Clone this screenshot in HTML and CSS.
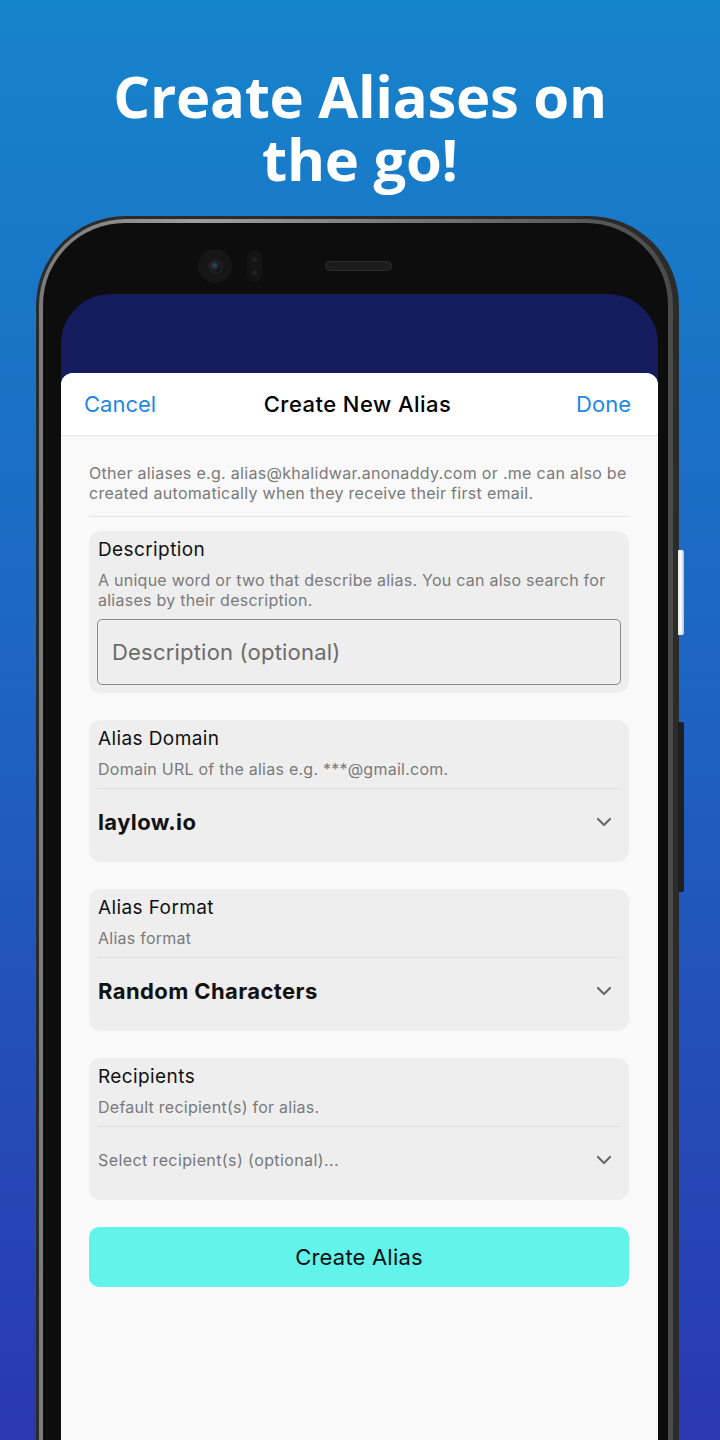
FILE: index.html
```html
<!DOCTYPE html>
<html lang="en">
<head>
<meta charset="utf-8">
<title>Create Aliases on the go!</title>
<link rel="stylesheet" href="styles.css">
</head>
<body>
<h1 class="headline"><span class="hl-line">Create Aliases on</span><span class="hl-line">the go!</span></h1>
<div class="phone">
  <div class="btn-power"></div>
  <div class="btn-volume"></div>
  <div class="rim">
    <div class="bezel">
      <div class="notch">
        <div class="camera"><div class="lens"></div></div>
        <div class="sensor"><span></span><span></span></div>
        <div class="speaker"></div>
      </div>
      <div class="screen">
        <div class="sheet">
          <div class="sheet-header">
            <span class="link cancel">Cancel</span>
            <span class="sheet-title">Create New Alias</span>
            <span class="link done">Done</span>
          </div>
          <div class="sheet-body">
            <p class="info">Other aliases e.g. alias@khalidwar.anonaddy.com or .me can also be created automatically when they receive their first email.</p>
            <div class="rule"></div>
            <div class="cards">
              <div class="card">
                <div class="card-title">Description</div>
                <div class="card-sub">A unique word or two that describe alias. You can also search for aliases by their description.</div>
                <div class="input">Description (optional)</div>
              </div>
              <div class="card">
                <div class="card-title">Alias Domain</div>
                <div class="card-sub">Domain URL of the alias e.g. ***@gmail.com.</div>
                <div class="card-rule"></div>
                <div class="select">
                  <span class="select-value">laylow.io</span>
                  <svg class="chev" width="16" height="10" viewBox="0 0 16 10"><polyline points="2,2 8,8 14,2" fill="none" stroke="#6a6a6a" stroke-width="2.2" stroke-linecap="round" stroke-linejoin="round"/></svg>
                </div>
              </div>
              <div class="card">
                <div class="card-title">Alias Format</div>
                <div class="card-sub">Alias format</div>
                <div class="card-rule"></div>
                <div class="select">
                  <span class="select-value">Random Characters</span>
                  <svg class="chev" width="16" height="10" viewBox="0 0 16 10"><polyline points="2,2 8,8 14,2" fill="none" stroke="#6a6a6a" stroke-width="2.2" stroke-linecap="round" stroke-linejoin="round"/></svg>
                </div>
              </div>
              <div class="card">
                <div class="card-title">Recipients</div>
                <div class="card-sub">Default recipient(s) for alias.</div>
                <div class="card-rule"></div>
                <div class="select">
                  <span class="select-placeholder">Select recipient(s) (optional)...</span>
                  <svg class="chev" width="16" height="10" viewBox="0 0 16 10"><polyline points="2,2 8,8 14,2" fill="none" stroke="#6a6a6a" stroke-width="2.2" stroke-linecap="round" stroke-linejoin="round"/></svg>
                </div>
              </div>
              <div class="create-btn">Create Alias</div>
            </div>
          </div>
        </div>
      </div>
    </div>
  </div>
</div>
</body>
</html>
```
FILE: styles.css
```css
html, body {
  margin: 0;
  padding: 0;
}
body {
  width: 720px;
  height: 1440px;
  overflow: hidden;
  background: linear-gradient(to bottom, #1684cb 0%, #1d66c2 45%, #2a38ae 100%);
  font-family: Inter, "Liberation Sans", sans-serif;
}
.headline {
  margin: 64px 0 0 0;
  font-family: "Open Sans", sans-serif;
  font-weight: 700;
  font-size: 58px;
  line-height: 63px;
  color: #ffffff;
  text-align: center;
  letter-spacing: -0.3px;
}
.hl-line {
  display: block;
  height: 63px;
}
.phone {
  position: relative;
  margin: 26px 0 0 36px;
  width: 643px;
  box-sizing: border-box;
  background: #2b2b2b;
  border-radius: 90px 90px 0 0;
  padding: 3px 6px 0 3px;
}
.btn-power {
  position: absolute;
  right: -5px;
  top: 334px;
  width: 6px;
  height: 85px;
  background: linear-gradient(to right, #e8e8e8, #ffffff 50%, #bdbdbd);
  border-radius: 0 2px 2px 0;
}
.btn-volume {
  position: absolute;
  right: -5px;
  top: 506px;
  width: 6px;
  height: 170px;
  background: #1f1f1f;
  border-radius: 0 2px 2px 0;
}
.rim {
  background: linear-gradient(to right, #7a7a7a 0%, #9e9e9e 25%, #6a6a6a 70%, #4a4a4a 100%);
  border-radius: 87px 87px 0 0;
  padding: 4px 5px 0 4px;
}
.bezel {
  background: #0d0d0d;
  border-radius: 82px 82px 0 0;
  padding: 0 10px 0 18px;
}
.notch {
  display: flex;
  align-items: center;
  height: 34px;
  padding-top: 26px;
  margin-bottom: 11px;
}
.camera {
  margin-left: 137px;
  width: 34px;
  height: 34px;
  border-radius: 50%;
  background: #161616;
  display: flex;
  align-items: center;
  justify-content: center;
}
.lens {
  width: 11px;
  height: 11px;
  border-radius: 50%;
  background: radial-gradient(circle at 40% 40%, #3a4560 0%, #1b1f2a 45%, #050505 100%);
  box-shadow: 0 0 0 2px #202020;
}
.sensor {
  margin-left: 15px;
  width: 15px;
  height: 32px;
  border-radius: 8px;
  background: #141414;
  display: flex;
  flex-direction: column;
  align-items: center;
  justify-content: space-around;
  padding: 3px 0;
  box-sizing: border-box;
}
.sensor span {
  width: 5px;
  height: 5px;
  border-radius: 50%;
  background: #222;
}
.speaker {
  margin-left: 63px;
  width: 67px;
  height: 10px;
  border-radius: 5px;
  background: #1c1c1c;
  box-shadow: inset 0 0 0 1px #2a2a2a;
}
.screen {
  background: #151c5e;
  border-radius: 50px 50px 0 0;
  padding-top: 79px;
}
.sheet {
  background: #f9f9f9;
  border-radius: 12px 12px 0 0;
  overflow: hidden;
  min-height: 1100px;
}
.sheet-header {
  display: grid;
  grid-template-columns: 1fr auto 1fr;
  align-items: center;
  height: 62px;
  background: #ffffff;
  border-bottom: 1px solid #e6e6e6;
  padding: 0 27px 0 23px;
}
.link {
  font-size: 22px;
  color: #1e88e5;
}
.done {
  justify-self: end;
}
.sheet-title {
  font-size: 22px;
  font-weight: 500;
  letter-spacing: 0.45px;
  color: #000;
}
.sheet-body {
  padding: 27px 29px 0 28px;
}
.info {
  margin: 0;
  font-size: 16px;
  letter-spacing: 0.3px;
  line-height: 20px;
  color: #7a7a7a;
}
.rule {
  height: 1px;
  background: #e4e4e4;
  margin: 13px 0 14px 0;
}
.cards {
  display: flex;
  flex-direction: column;
  gap: 27px;
}
.card {
  background: #eeeeee;
  border-radius: 12px;
  padding: 8px 8px 7px 8px;
}
.card-title {
  font-size: 19px;
  letter-spacing: 0.4px;
  line-height: 22px;
  color: #111;
  padding-left: 1px;
}
.card-sub {
  margin-top: 9px;
  font-size: 16px;
  letter-spacing: 0.25px;
  line-height: 20px;
  color: #7a7a7a;
  padding-left: 1px;
}
.input {
  margin-top: 9px;
  margin-bottom: 1px;
  height: 66px;
  box-sizing: border-box;
  border: 1px solid #8a8a8a;
  border-radius: 5px;
  display: flex;
  align-items: center;
  padding-left: 14px;
  font-size: 22px;
  letter-spacing: 0.2px;
  color: #6b6b6b;
}
.card-rule {
  margin-top: 9px;
  height: 1px;
  background: #e0e0e0;
}
.select {
  height: 66px;
  display: flex;
  align-items: center;
  justify-content: space-between;
  padding: 0 9px 0 1px;
}
.select-value {
  font-size: 22px;
  font-weight: 700;
  letter-spacing: 0.4px;
  color: #111;
}
.select-placeholder {
  font-size: 16px;
  letter-spacing: 0.4px;
  color: #777;
}
.chev {
  display: block;
}
.create-btn {
  height: 60px;
  border-radius: 10px;
  background: #62f3ea;
  display: flex;
  align-items: center;
  justify-content: center;
  font-size: 22px;
  letter-spacing: 0.2px;
  color: #111;
}
```
